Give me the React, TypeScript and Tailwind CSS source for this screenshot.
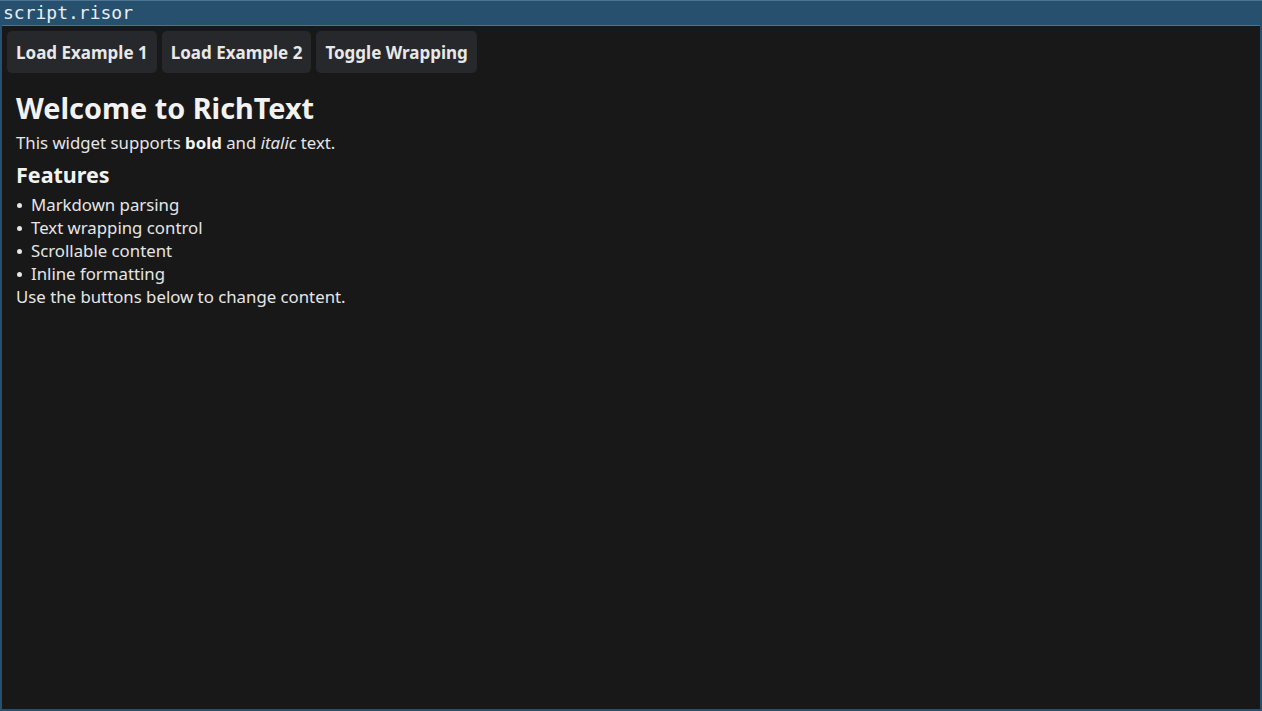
import React from "react";

export default function App() {
  const items = ["Markdown parsing", "Text wrapping control", "Scrollable content", "Inline formatting"];
  return (
    <div className="w-[1262px] h-[711px] bg-[#27506f] flex flex-col overflow-hidden">
      <div className="h-[25px] shrink-0 border-t border-[#4d7394] flex items-center pl-[3px] text-[18px] leading-none text-[#e8eef3]" style={{ fontFamily: '"DejaVu Sans Mono", monospace' }}>
        script.risor
      </div>
      <div className="flex-1 ml-[2px] mr-[2px] mb-[2px] border-t border-[#4d7394] bg-[#181818] text-[#e6e6e6]" style={{ fontFamily: '"Noto Sans", sans-serif' }}>
        <div className="flex gap-[5px] pl-[5px] pt-[5px]">
          {["Load Example 1", "Load Example 2", "Toggle Wrapping"].map((b) => (
            <button key={b} className="h-[42px] px-[9px] rounded-[5px] bg-[#27282c] text-[17px] leading-none font-bold text-[#e8e8e8]">
              {b}
            </button>
          ))}
        </div>
        <div className="pl-[14px] pt-[15px]">
          <h1 className="text-[28.8px] font-bold leading-[40px] text-[#f2f2f2]">Welcome to RichText</h1>
          <p className="text-[16.8px] leading-[23px] mt-[3px]">
            This widget supports <b className="text-[#f2f2f2]">bold</b> and <i>italic</i> text.
          </p>
          <h2 className="text-[21.5px] font-bold leading-[30px] mt-[6px] text-[#f2f2f2]">Features</h2>
          <div className="mt-[3px]">
            {items.map((t) => (
              <div key={t} className="text-[16.8px] leading-[23px] flex items-center">
                <span className="w-[15px] flex items-center pl-[1px]">
                  <span className="w-[5px] h-[5px] rounded-full bg-[#e6e6e6] mt-[1px]" />
                </span>
                <span>{t}</span>
              </div>
            ))}
          </div>
          <p className="text-[16.8px] leading-[23px]">Use the buttons below to change content.</p>
        </div>
      </div>
    </div>
  );
}
